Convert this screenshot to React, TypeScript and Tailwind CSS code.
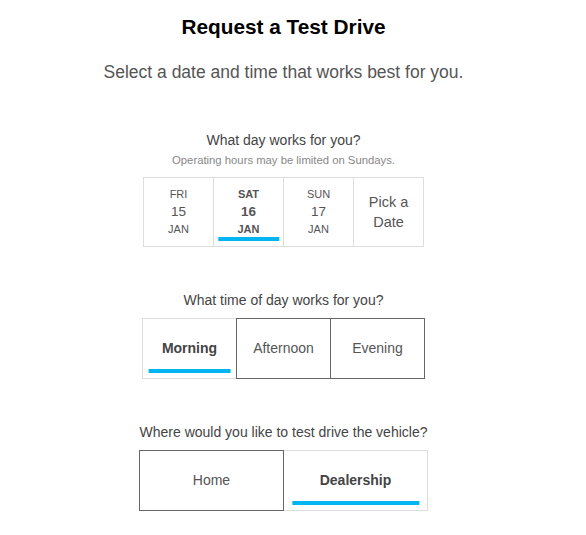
import { useState } from 'react';

const days = [
  { dow: 'FRI', day: '15', month: 'JAN' },
  { dow: 'SAT', day: '16', month: 'JAN' },
  { dow: 'SUN', day: '17', month: 'JAN' },
];

const times = ['Morning', 'Afternoon', 'Evening'];
const places = ['Home', 'Dealership'];

function Underline() {
  return <span className="absolute bottom-[5px] left-1/2 h-[4px] w-[89%] -translate-x-1/2 bg-[#00b5f1]" />;
}

export default function App() {
  const [day, setDay] = useState('SAT');
  const [time, setTime] = useState('Morning');
  const [place, setPlace] = useState('Dealership');

  return (
    <div className="min-h-[535px] w-[586px] bg-white font-['Liberation_Sans',Arial,sans-serif]">
      <div className="flex w-[567px] flex-col items-center pt-[13px]">
        <h1 className="text-[20.8px] font-bold leading-[28px] text-black">Request a Test Drive</h1>
        <p className="mt-[19px] text-[17.5px] leading-[24px] text-[#555]">
          Select a date and time that works best for you.
        </p>

        <h2 className="mt-[46px] text-[14px] leading-[20px] text-[#444]">What day works for you?</h2>
        <p className="mt-[2px] text-[11.3px] leading-[16px] text-[#888]">
          Operating hours may be limited on Sundays.
        </p>
        <div className="mt-[9px] flex">
          {days.map((d, i) => {
            const active = day === d.dow;
            return (
              <button
                key={d.dow}
                onClick={() => setDay(d.dow)}
                className={`relative flex h-[70px] w-[71px] flex-col items-center border border-[#dddddd] pt-[8px] text-[#555] ${
                  i > 0 ? '-ml-px' : ''
                } ${active ? 'font-bold text-[#444]' : ''}`}
              >
                <span className="text-[11px] leading-[16px]">{d.dow}</span>
                <span className="text-[13.5px] leading-[20px]">{d.day}</span>
                <span className="text-[11px] leading-[14px]">{d.month}</span>
                {active && <Underline />}
              </button>
            );
          })}
          <button className="-ml-px flex h-[70px] w-[71px] items-center justify-center border border-[#dddddd] text-[14.5px] leading-[20px] text-[#555]">
            Pick a<br />Date
          </button>
        </div>

        <h2 className="mt-[43px] text-[14px] leading-[20px] text-[#444]">What time of day works for you?</h2>
        <div className="mt-[8px] flex">
          {times.map((t, i) => {
            const active = time === t;
            return (
              <button
                key={t}
                onClick={() => setTime(t)}
                className={`relative flex h-[61px] w-[95px] items-center justify-center border text-[14px] ${
                  i > 0 ? '-ml-px' : ''
                } ${active ? 'border-[#dddddd] font-bold text-[#444]' : 'z-10 border-[#666] text-[#555]'}`}
              >
                {t}
                {active && <Underline />}
              </button>
            );
          })}
        </div>

        <h2 className="mt-[43px] text-[14px] leading-[20px] text-[#444]">
          Where would you like to test drive the vehicle?
        </h2>
        <div className="mt-[8px] flex">
          {places.map((p, i) => {
            const active = place === p;
            return (
              <button
                key={p}
                onClick={() => setPlace(p)}
                className={`relative flex h-[61px] w-[145px] items-center justify-center border text-[14px] ${
                  i > 0 ? '-ml-px' : ''
                } ${active ? 'border-[#dddddd] font-bold text-[#444]' : 'z-10 border-[#666] text-[#555]'}`}
              >
                {p}
                {active && <Underline />}
              </button>
            );
          })}
        </div>
      </div>
    </div>
  );
}
